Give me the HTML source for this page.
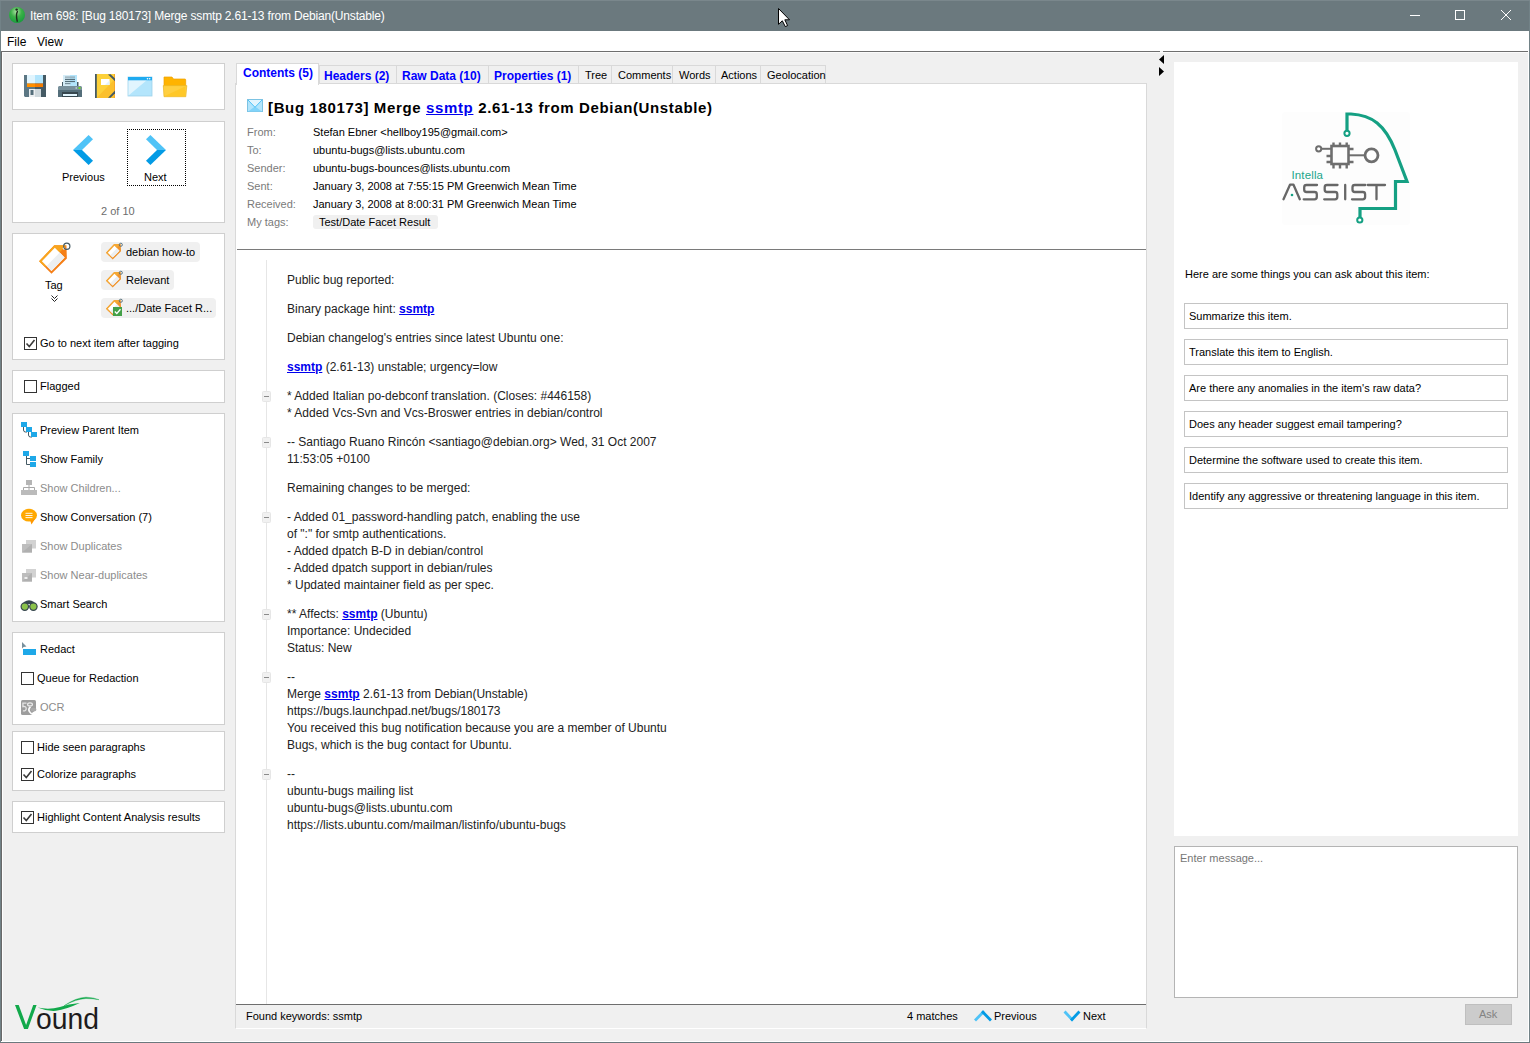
<!DOCTYPE html>
<html><head><meta charset="utf-8">
<style>
*{box-sizing:border-box;margin:0;padding:0}
html,body{width:1530px;height:1043px;overflow:hidden;background:#f0f0f0;font-family:"Liberation Sans",sans-serif;font-size:11px;color:#000}
.a{position:absolute}
.t{position:absolute;white-space:pre;line-height:1}
.box{position:absolute;background:#fff;border:1px solid #cfcfcf}
.cb{position:absolute;width:13px;height:13px;border:1px solid #333;background:#fff}
.tab{position:absolute;top:65px;height:18px;background:#f0f0f0;border:1px solid #d9d9d9;border-bottom:none}
.sg{position:absolute;left:1184px;width:324px;height:26px;border:1px solid #c4c4c4;background:#fff}
.bd{font-size:12px;color:#222}
a,.lk{color:#0000ee;text-decoration:underline;font-weight:bold}
</style></head><body>
<!-- window frame -->
<div class="a" style="left:0;top:0;width:1530px;height:31px;background:#6b797e"></div>
<div class="a" style="left:0;top:0;width:1px;height:1043px;background:#728287"></div>
<div class="a" style="left:1529px;top:0;width:1px;height:1043px;background:#728287"></div>
<div class="a" style="left:0;top:1042px;width:1530px;height:1px;background:#6b797e"></div>
<div class="a" style="left:1px;top:1041px;width:1528px;height:1px;background:#fff"></div>
<div class="a" style="left:1528px;top:31px;width:1px;height:1011px;background:#fff"></div>
<div class="a" style="left:1px;top:31px;width:1px;height:20px;background:#fff"></div>
<div class="a" style="left:1px;top:51px;width:1px;height:990px;background:#696969"></div>
<div class="a" style="left:2px;top:52px;width:1px;height:989px;background:#fff"></div>
<div class="a" style="left:2px;top:52px;width:1526px;height:1px;background:#fbfbfb"></div>
<!-- menu bar -->
<div class="a" style="left:1px;top:31px;width:1527px;height:20px;background:#fff"></div>
<div class="a" style="left:1px;top:51px;width:1527px;height:1px;background:#6e6e6e"></div>

<!-- left boxes -->
<div class="box" style="left:12px;top:63px;width:213px;height:47px"></div>
<div class="box" style="left:12px;top:121px;width:213px;height:102px"></div>
<div class="box" style="left:12px;top:233px;width:213px;height:127px"></div>
<div class="box" style="left:12px;top:370px;width:213px;height:33px"></div>
<div class="box" style="left:12px;top:413px;width:213px;height:209px"></div>
<div class="box" style="left:12px;top:632px;width:213px;height:93px"></div>
<div class="box" style="left:12px;top:731px;width:213px;height:60px"></div>
<div class="box" style="left:12px;top:801px;width:213px;height:32px"></div>

<!-- center content -->
<div class="a" style="left:235px;top:83px;width:912px;height:946px;background:#fff;border:1px solid #d9d9d9;border-bottom-color:#fff"></div>
<div class="a" style="left:237px;top:249px;width:909px;height:1px;background:#7a7a7a"></div>
<div class="a" style="left:266px;top:260px;width:1px;height:744px;background:#e6e6e6"></div>
<div class="a" style="left:236px;top:1004px;width:910px;height:1px;background:#6e6e6e"></div>
<div class="a" style="left:236px;top:1005px;width:910px;height:23px;background:#f0f0f0"></div>

<!-- right panel -->
<div class="a" style="left:1174px;top:62px;width:344px;height:774px;background:#fff"></div>
<div class="a" style="left:1174px;top:846px;width:344px;height:152px;background:#fff;border:1px solid #b4b4b4"></div>
<div class="a" style="left:1465px;top:1004px;width:47px;height:21px;background:#cccccc;border:1px solid #bfbfbf"></div>


<svg class="a" style="left:0;top:0" width="1530" height="1043" viewBox="0 0 1530 1043">
<!-- title bar accents -->
<rect x="0" y="0" width="1530" height="1" fill="#7a878c"/>
<!-- app icon -->
<defs>
<radialGradient id="gg" cx="0.45" cy="0.3" r="0.75"><stop offset="0" stop-color="#a8e0a0"/><stop offset="0.45" stop-color="#3cb048"/><stop offset="1" stop-color="#129a3a"/></radialGradient>
</defs>
<circle cx="17" cy="15" r="8" fill="url(#gg)"/>
<circle cx="16.6" cy="9.6" r="1.2" fill="#1d2a1d"/><path d="M17.4,11.6 C16,13.8 16.4,17.5 17.2,21.2" stroke="#1d2a1d" stroke-width="1.4" fill="none" stroke-linecap="round"/>
<!-- window controls -->
<rect x="1410" y="15" width="10" height="1" fill="#fff"/>
<rect x="1455.5" y="10.5" width="9" height="9" fill="none" stroke="#fff" stroke-width="1"/>
<path d="M1501,10 L1511,20 M1511,10 L1501,20" stroke="#fff" stroke-width="1"/>
<!-- mouse cursor -->
<path d="M778.5,8.5 L778.5,24.3 L782.3,20.8 L785.3,26.6 L787.6,25.6 L784.8,19.8 L789.5,19.8 Z" fill="#fff" stroke="#000" stroke-width="1" stroke-linejoin="miter"/>

<!-- floppy -->
<g transform="translate(24,75)">
<path d="M0,0 H11 V22 H1 L0,21 Z" fill="#5c7784"/>
<rect x="11" y="0" width="11" height="22" fill="#455a64"/>
<rect x="3" y="0" width="8" height="8.5" fill="#e1f5fe"/>
<rect x="11" y="0" width="8" height="8.5" fill="#b3e5fc"/>
<rect x="3" y="8.5" width="8" height="3.5" fill="#ff8f00"/>
<rect x="11" y="8.5" width="8" height="3.5" fill="#f57c00"/>
<rect x="5" y="14" width="6" height="8" fill="#eceff1"/>
<rect x="11" y="14" width="6" height="8" fill="#cfd8dc"/>
<rect x="6.5" y="15" width="3" height="5" fill="#546e7a"/>
</g>
<!-- printer -->
<g transform="translate(56,72)">
<rect x="6" y="10" width="1.5" height="5" fill="#455a64"/>
<rect x="21" y="10" width="1.5" height="5" fill="#455a64"/>
<rect x="7" y="3" width="14" height="11" fill="#d4ecf7"/>
<rect x="14" y="3" width="7" height="11" fill="#b3e5fc"/>
<rect x="9" y="4.5" width="10" height="1.2" fill="#90a4ae"/>
<rect x="9" y="6.8" width="10" height="1.2" fill="#546e7a"/>
<rect x="9" y="8.9" width="10" height="1.2" fill="#546e7a"/>
<rect x="9" y="11" width="5.5" height="1.2" fill="#78909c"/>
<path d="M2,15 L3,14 H25 L26,15 V18 H2 Z" fill="#78909c"/>
<rect x="2" y="18" width="24" height="7" fill="#546e7a"/>
<rect x="6" y="20" width="16" height="5" fill="#37474f"/>
<rect x="7" y="22" width="14" height="2" fill="#e1f5fe"/>
<rect x="22.5" y="15" width="2" height="2" fill="#76d820"/>
<rect x="19.5" y="15" width="1.5" height="2" fill="#b0bec5"/>
</g>
<!-- notebook -->
<g transform="translate(92,72)">
<rect x="3" y="2" width="20" height="24" fill="#fdd13a"/>
<path d="M4.5,26 L22,8 V26 Z" fill="#fbc02d"/>
<rect x="22" y="2" width="1" height="24" fill="#f9a825"/>
<rect x="3" y="2" width="1.8" height="24" fill="#455a64"/>
<path d="M16,2.5 L23,9.2 V6.6 L18.6,2.3 Z" fill="#455a64"/>
<path d="M23,18.6 L16,25.8 H18.6 L23,21.3 Z" fill="#455a64"/>
<rect x="9" y="7" width="8.5" height="6" fill="#fff"/>
<path d="M13,13 L17.5,8.5 V13 Z" fill="#e3f2fd"/>
</g>
<!-- window icon -->
<g transform="translate(128,77)">
<rect x="0" y="0" width="24" height="19" fill="#b3e5fc" stroke="#9fd3ea" stroke-width="0.8"/>
<path d="M0.5,18.5 L19,3 H0.5 Z" fill="#e1f5fe"/>
<rect x="0" y="0" width="24" height="3.3" fill="#1eaaf0"/>
<circle cx="19.5" cy="1.7" r="0.8" fill="#fff"/><circle cx="21.7" cy="1.7" r="0.8" fill="#fff"/>
</g>
<!-- folder -->
<g transform="translate(161,72)">
<path d="M3,5 H11 L12.5,7 H24 Q24.7,7 24.7,8 V15 H3 Z" fill="#ffb300" stroke="#eea000" stroke-width="0.7"/>
<path d="M2.3,13.6 H25.8 L24.8,24.7 H3 Z" fill="#ffcf40" stroke="#e9b424" stroke-width="0.7"/>
<path d="M3.3,24.2 L24.5,14.2 L24.2,24.2 Z" fill="#ffc828"/>
</g>

<!-- previous / next chevrons -->
<path d="M73,150 L88.6,135 L93,139.2 L82,150 Z" fill="#4fc3f7"/>
<path d="M73,150 L88.6,165 L93,160.8 L82,150 Z" fill="#039be5"/>
<path d="M166,150 L150.4,135 L146,139.2 L157,150 Z" fill="#4fc3f7"/>
<path d="M166,150 L150.4,165 L146,160.8 L157,150 Z" fill="#039be5"/>


<!-- big tag -->
<g>
<path d="M39.1,261.2 L54.3,245.2 L66.4,245.4 L66.9,258.6 L51.5,273.7 Z" fill="#f57f17"/>
<path d="M39.1,261.2 L54.3,245.2 L66.6,245.3 L45,266.9 Z" fill="#f9a51e"/>
<path d="M41.9,261.2 L54.8,247.8 L64.6,257.4 L51.5,270.9 Z" fill="#fff"/>
<path d="M46.6,266.1 L59.7,252.6 L64.6,257.4 L51.5,270.9 Z" fill="#eceff1"/>
<circle cx="64" cy="248.4" r="1.2" fill="#fff"/>
<circle cx="66.8" cy="246.3" r="3.1" fill="none" stroke="#455a64" stroke-width="1.2"/>
</g>
<path d="M51.5,295.5 L54.5,298.5 L57.5,295.5 M51.5,298.5 L54.5,301.5 L57.5,298.5" fill="none" stroke="#222" stroke-width="1"/>

<!-- chips -->
<rect x="101" y="242" width="99" height="20" rx="4" fill="#f0f0f0"/>
<rect x="101" y="270" width="73" height="20" rx="4" fill="#f0f0f0"/>
<rect x="101" y="298" width="115" height="20" rx="4" fill="#f0f0f0"/>
<g id="mt" transform="translate(106,252.7) scale(0.54) translate(-39.1,-261.2)">
<path d="M39.1,261.2 L54.3,245.2 L66.4,245.4 L66.9,258.6 L51.5,273.7 Z" fill="#f0932a"/>
<path d="M39.1,261.2 L54.3,245.2 L66.6,245.3 L45,266.9 Z" fill="#f5a834"/>
<path d="M42.4,261.2 L54.8,248.3 L64,257.4 L51.5,270.3 Z" fill="#fff"/>
<path d="M46.8,266 L59.5,253 L64,257.4 L51.5,270.3 Z" fill="#eceff1"/>
<circle cx="66.5" cy="246.5" r="2.9" fill="none" stroke="#546e7a" stroke-width="1.7"/>
</g>
<use href="#mt" y="28"/>
<use href="#mt" y="56"/>
<rect x="113" y="307" width="9" height="9" fill="#43a047"/>
<path d="M114.8,311.5 L116.8,313.5 L120.5,309.3" fill="none" stroke="#fff" stroke-width="1.3"/>

<!-- checkboxes -->
<rect x="24.5" y="337.5" width="12" height="12" fill="#fff" stroke="#333" stroke-width="1"/>
<path d="M26.5,343.5 L29.3,346.5 L34.5,340" fill="none" stroke="#3a3a3a" stroke-width="1.6"/>
<rect x="24.5" y="380.5" width="12" height="12" fill="#fff" stroke="#333" stroke-width="1"/>
<rect x="21.5" y="672.5" width="12" height="12" fill="#fff" stroke="#333" stroke-width="1"/>
<rect x="21.5" y="741.5" width="12" height="12" fill="#fff" stroke="#333" stroke-width="1"/>
<rect x="21.5" y="768.5" width="12" height="12" fill="#fff" stroke="#333" stroke-width="1"/>
<path d="M23.5,774.5 L26.3,777.5 L31.5,771" fill="none" stroke="#3a3a3a" stroke-width="1.6"/>
<rect x="21.5" y="811.5" width="12" height="12" fill="#fff" stroke="#333" stroke-width="1"/>
<path d="M23.5,817.5 L26.3,820.5 L31.5,814" fill="none" stroke="#3a3a3a" stroke-width="1.6"/>

<!-- preview parent icon -->
<path d="M23.5,427 V430 Q23.5,432 25.5,432 H27 M28.5,432 V435 Q28.5,437 30.5,437 H32" fill="none" stroke="#455a64" stroke-width="1"/>
<rect x="21" y="422" width="6" height="5" fill="#1ea8e8"/>
<rect x="26" y="427" width="6" height="5" fill="#1ea8e8"/>
<rect x="31" y="432" width="6" height="5" fill="#1ea8e8"/>
<!-- show family icon -->
<path d="M26.5,456 V464.5 H30 M26.5,458.5 H30" fill="none" stroke="#455a64" stroke-width="1"/>
<rect x="23" y="451" width="6" height="5" fill="#1ea8e8"/>
<rect x="30" y="456" width="6" height="5" fill="#1ea8e8"/>
<rect x="30" y="462" width="6" height="5" fill="#1ea8e8"/>
<!-- show children (gray) -->
<rect x="26" y="480" width="6" height="5" fill="#b5b5b5"/>
<path d="M29,485 V490 M23.5,490 V487.5 H34.5 V490" fill="none" stroke="#a8a8a8" stroke-width="1"/>
<rect x="21" y="490" width="16" height="5" fill="#bbbbbb"/>
<!-- conversation -->
<ellipse cx="29" cy="515.2" rx="8" ry="6.4" fill="#ffa800"/>
<path d="M30,520 L31.5,524.5 L35,519 Z" fill="#ff9800"/>
<path d="M25.5,513.3 H32.5 M25.5,515.5 H32.5 M25.5,517.6 H32.5" stroke="#fff" stroke-width="0.9"/>
<!-- duplicates -->
<rect x="26" y="540" width="10" height="8.5" fill="#d2d2d2"/>
<rect x="22" y="544" width="10" height="8.5" fill="#bdbdbd"/>
<path d="M22,552.5 L32,544 V552.5 Z" fill="#b0b0b0"/>
<rect x="26" y="569" width="10" height="8.5" fill="#d2d2d2"/>
<rect x="22" y="573" width="10" height="8.5" fill="#bdbdbd"/>
<path d="M22,581.5 L32,573 V581.5 Z" fill="#b0b0b0"/>
<rect x="24.5" y="577" width="3" height="2" fill="#eee"/>
<!-- binoculars -->
<path d="M24,602 Q29,598.5 34,602 L35,604 H23 Z" fill="#37474f"/>
<circle cx="24.8" cy="606.6" r="3.7" fill="#8bc34a" stroke="#37474f" stroke-width="1.2"/>
<circle cx="33.4" cy="606.6" r="3.7" fill="#8bc34a" stroke="#37474f" stroke-width="1.2"/>
<!-- redact -->
<rect x="23" y="649" width="13" height="6" fill="#1ea8e8"/>
<path d="M22,642 V648.5 L23.6,647 L26.5,646.5 Z" fill="#78909c"/>
<!-- ocr -->
<rect x="21" y="700" width="15" height="15" rx="1.5" fill="#9d9d9d"/>
<path d="M26.5,703.2 H22.9 V706.6 Q26.2,706 26.2,708.6 Q26.2,711.2 22.9,710.8" fill="none" stroke="#e4e4e4" stroke-width="1.3"/>
<ellipse cx="30" cy="704.4" rx="2.4" ry="1.5" fill="none" stroke="#ececec" stroke-width="1.2"/>
<path d="M30.5,706.8 Q27.8,709 29.4,711.5 L31.8,714.3" fill="none" stroke="#fafafa" stroke-width="1.6"/>
<path d="M31,713.8 L35.2,710.6 H36.2 V715.2 H32.5 Z" fill="#fff"/>
<ellipse cx="33.4" cy="709.6" rx="3" ry="1.9" fill="#a9a9a9"/>
<!-- envelope -->
<g transform="translate(247,99)">
<rect x="0.5" y="0.5" width="15" height="12" fill="#b3e5fc" stroke="#7cc3e3" stroke-width="1"/>
<path d="M1,12.5 L8,7.5 L15,12.5 Z" fill="#81d4fa"/>
<path d="M1,1 L8,8 L15,1 Z" fill="#e1f5fe"/>
<path d="M1,1 L8,8.3 L15,1" fill="none" stroke="#4fc3f7" stroke-width="1"/>
</g>

<!-- fold markers -->
<g id="fm"><rect x="262.5" y="391.5" width="8" height="10" rx="1" fill="#f1f1f1" stroke="#e6e6e6" stroke-width="1"/><rect x="264" y="396" width="5" height="1" fill="#8a8a8a"/></g>
<use href="#fm" y="46"/>
<use href="#fm" y="121"/>
<use href="#fm" y="218"/>
<use href="#fm" y="281"/>
<use href="#fm" y="378"/>

<!-- status chevrons -->
<path d="M976,1019.5 L983,1012.3" stroke="#4fc3f7" stroke-width="2.8" stroke-linecap="square"/>
<path d="M983,1012.3 L990,1019.5" stroke="#039be5" stroke-width="2.8" stroke-linecap="square"/>
<path d="M1065.5,1012.5 L1072,1019.5" stroke="#4fc3f7" stroke-width="2.8" stroke-linecap="square"/>
<path d="M1072,1019.5 L1078.5,1012.5" stroke="#039be5" stroke-width="2.8" stroke-linecap="square"/>

<!-- splitter arrows -->
<rect x="1160" y="51" width="3" height="1" fill="#f4f4f4"/>
<path d="M1164,55 V64 L1159,59.5 Z" fill="#000"/>
<path d="M1159,67 V76 L1164,71.5 Z" fill="#000"/>

<!-- Intella Assist logo -->
<rect x="1282" y="112" width="128" height="113" rx="3" fill="#fdfdfd"/>
<path d="M1347,131 V114 H1351 C1372,115 1385,125 1395,150 L1407,181.5 H1395.5 V208.5 H1360 V217" fill="none" stroke="#15a083" stroke-width="3.2"/>
<circle cx="1347" cy="133.3" r="2.6" fill="#fff" stroke="#15a083" stroke-width="2"/>
<circle cx="1359.8" cy="220" r="2.6" fill="#fff" stroke="#15a083" stroke-width="2"/>
<g stroke="#6e6e6e" fill="none">
<rect x="1331.5" y="146" width="17" height="18" stroke-width="2.6"/>
<path d="M1333.5,142.5 V146 M1340,142.5 V146 M1346.7,142.5 V146 M1333.5,164 V168.5 M1340,164 V168.5 M1346.7,164 V168.5 M1326.5,156 H1331 M1326.5,162 H1331 M1349,149 H1353.5 M1349,162 H1353.5" stroke-width="2.4"/>
<path d="M1321,148.8 H1331" stroke-width="2"/>
<circle cx="1318.7" cy="148.8" r="2.6" stroke-width="2" fill="#fff"/>
<path d="M1349,155.3 H1364" stroke-width="2"/>
<circle cx="1371.5" cy="155.3" r="6.5" stroke-width="2.8" fill="#fff"/>
</g>
<text x="1291.5" y="178.5" font-family="Liberation Sans" font-size="11.5" fill="#22a58a" textLength="31.5">Intella</text>
<g fill="none" stroke="#676767" stroke-width="2.3" stroke-linecap="round" stroke-linejoin="round">
<path d="M1283.5,199.3 L1290,184.7 H1293.5 L1299.8,199.3"/>
<path d="M1317,185 H1306.5 Q1304.2,185 1304.2,187.3 V189.8 Q1304.2,192 1306.5,192 H1314.5 Q1316.8,192 1316.8,194.3 V197 Q1316.8,199.3 1314.5,199.3 H1303.7"/>
<path d="M1337.5,185 H1327 Q1324.7,185 1324.7,187.3 V189.8 Q1324.7,192 1327,192 H1335 Q1337.3,192 1337.3,194.3 V197 Q1337.3,199.3 1335,199.3 H1324.2"/>
<path d="M1345.2,185 V199.3"/>
<path d="M1365.3,185 H1354.8 Q1352.5,185 1352.5,187.3 V189.8 Q1352.5,192 1354.8,192 H1362.8 Q1365.1,192 1365.1,194.3 V197 Q1365.1,199.3 1362.8,199.3 H1352"/>
<path d="M1367.8,185 H1385 M1376.5,185 V199.3"/>
</g>
<circle cx="1292" cy="195" r="1.3" fill="#15a083"/>

<!-- Vound logo -->
<path d="M15,1005 H18.7 L26.1,1025 L33.2,1005 H36.6 L27.9,1029 H24.1 Z" fill="#12a94b"/>
<text x="36" y="1029" font-family="Liberation Sans" font-size="30" fill="#1d1b1c" textLength="63" lengthAdjust="spacingAndGlyphs">ound</text>
<path d="M37.5,1007.5 Q47,1011.5 56,1010.8 Q66,1009.5 79.8,1003 Q68,1004 60,1007 Q49,1010 37.5,1007.5 Z" fill="#12a94b"/>
<path d="M64,1005.8 Q76,997.5 86,997.2 Q93,997.2 99,999.7 Q92,998.5 86,998.5 Q76,999 64,1005.8 Z" fill="#12a94b" stroke="#12a94b" stroke-width="0.4"/>
</svg>
<div class="a" style="left:127px;top:129px;width:59px;height:57px;border:1px dotted #000"></div>
<!-- title bar text -->
<div class="t" style="left:30px;top:10px;font-size:12px;color:#fff;letter-spacing:-0.17px">Item 698: [Bug 180173] Merge ssmtp 2.61-13 from Debian(Unstable)</div>
<!-- menu -->
<div class="t" style="left:7px;top:36px;font-size:12px">File</div>
<div class="t" style="left:37px;top:36px;font-size:12px">View</div>

<!-- left panel text -->
<div class="t" style="left:62px;top:172px">Previous</div>
<div class="t" style="left:144px;top:172px">Next</div>
<div class="t" style="left:101px;top:206px;color:#6d6d6d">2 of 10</div>
<div class="t" style="left:45px;top:280px">Tag</div>
<div class="t" style="left:126px;top:247px">debian how-to</div>
<div class="t" style="left:126px;top:275px">Relevant</div>
<div class="t" style="left:126px;top:303px">.../Date Facet R...</div>
<div class="t" style="left:40px;top:338px">Go to next item after tagging</div>
<div class="t" style="left:40px;top:381px">Flagged</div>
<div class="t" style="left:40px;top:425px">Preview Parent Item</div>
<div class="t" style="left:40px;top:454px">Show Family</div>
<div class="t" style="left:40px;top:483px;color:#8c8c8c">Show Children...</div>
<div class="t" style="left:40px;top:512px">Show Conversation (7)</div>
<div class="t" style="left:40px;top:541px;color:#8c8c8c">Show Duplicates</div>
<div class="t" style="left:40px;top:570px;color:#8c8c8c">Show Near-duplicates</div>
<div class="t" style="left:40px;top:599px">Smart Search</div>
<div class="t" style="left:40px;top:644px">Redact</div>
<div class="t" style="left:37px;top:673px">Queue for Redaction</div>
<div class="t" style="left:40px;top:702px;color:#8c8c8c">OCR</div>
<div class="t" style="left:37px;top:742px">Hide seen paragraphs</div>
<div class="t" style="left:37px;top:769px">Colorize paragraphs</div>
<div class="t" style="left:37px;top:812px">Highlight Content Analysis results</div>

<!-- tabs -->
<div class="a" style="left:236px;top:63px;width:83px;height:22px;background:#fff;border:1px solid #d9d9d9;border-bottom:none"></div>
<div class="tab" style="left:319px;width:78px"></div>
<div class="tab" style="left:396px;width:93px"></div>
<div class="tab" style="left:488px;width:91px"></div>
<div class="tab" style="left:578px;width:34px"></div>
<div class="tab" style="left:611px;width:62px"></div>
<div class="tab" style="left:672px;width:44px"></div>
<div class="tab" style="left:715px;width:46px"></div>
<div class="tab" style="left:760px;width:66px"></div>
<div class="t" style="left:243px;top:67px;font-size:12px;font-weight:bold;color:#0000ff">Contents (5)</div>
<div class="t" style="left:324px;top:70px;font-size:12px;font-weight:bold;color:#0000ff">Headers (2)</div>
<div class="t" style="left:402px;top:70px;font-size:12px;font-weight:bold;color:#0000ff">Raw Data (10)</div>
<div class="t" style="left:494px;top:70px;font-size:12px;font-weight:bold;color:#0000ff">Properties (1)</div>
<div class="t" style="left:585px;top:70px">Tree</div>
<div class="t" style="left:618px;top:70px">Comments</div>
<div class="t" style="left:679px;top:70px">Words</div>
<div class="t" style="left:721px;top:70px">Actions</div>
<div class="t" style="left:767px;top:70px">Geolocation</div>

<!-- header -->
<div class="t" style="left:268px;top:100px;font-size:15px;font-weight:bold;letter-spacing:0.64px">[Bug 180173] Merge <span class="lk">ssmtp</span> 2.61-13 from Debian(Unstable)</div>
<div class="t" style="left:247px;top:127px;color:#7a7a7a">From:</div>
<div class="t" style="left:247px;top:145px;color:#7a7a7a">To:</div>
<div class="t" style="left:247px;top:163px;color:#7a7a7a">Sender:</div>
<div class="t" style="left:247px;top:181px;color:#7a7a7a">Sent:</div>
<div class="t" style="left:247px;top:199px;color:#7a7a7a">Received:</div>
<div class="t" style="left:247px;top:217px;color:#7a7a7a">My tags:</div>
<div class="t" style="left:313px;top:127px">Stefan Ebner &lt;hellboy195@gmail.com&gt;</div>
<div class="t" style="left:313px;top:145px">ubuntu-bugs@lists.ubuntu.com</div>
<div class="t" style="left:313px;top:163px">ubuntu-bugs-bounces@lists.ubuntu.com</div>
<div class="t" style="left:313px;top:181px">January 3, 2008 at 7:55:15 PM Greenwich Mean Time</div>
<div class="t" style="left:313px;top:199px">January 3, 2008 at 8:00:31 PM Greenwich Mean Time</div>
<div class="a" style="left:313px;top:215px;width:125px;height:14px;background:#f0f0f0;border-radius:3px"></div>
<div class="t" style="left:319px;top:217px">Test/Date Facet Result</div>

<!-- body -->
<div class="t bd" style="left:287px;top:274px">Public bug reported:</div>
<div class="t bd" style="left:287px;top:303px">Binary package hint: <span class="lk">ssmtp</span></div>
<div class="t bd" style="left:287px;top:332px">Debian changelog's entries since latest Ubuntu one:</div>
<div class="t bd" style="left:287px;top:361px"><span class="lk">ssmtp</span> (2.61-13) unstable; urgency=low</div>
<div class="t bd" style="left:287px;top:390px">* Added Italian po-debconf translation. (Closes: #446158)</div>
<div class="t bd" style="left:287px;top:407px">* Added Vcs-Svn and Vcs-Broswer entries in debian/control</div>
<div class="t bd" style="left:287px;top:436px">-- Santiago Ruano Rincón &lt;santiago@debian.org&gt; Wed, 31 Oct 2007</div>
<div class="t bd" style="left:287px;top:453px">11:53:05 +0100</div>
<div class="t bd" style="left:287px;top:482px">Remaining changes to be merged:</div>
<div class="t bd" style="left:287px;top:511px">- Added 01_password-handling patch, enabling the use</div>
<div class="t bd" style="left:287px;top:528px">of ":" for smtp authentications.</div>
<div class="t bd" style="left:287px;top:545px">- Added dpatch B-D in debian/control</div>
<div class="t bd" style="left:287px;top:562px">- Added dpatch support in debian/rules</div>
<div class="t bd" style="left:287px;top:579px">* Updated maintainer field as per spec.</div>
<div class="t bd" style="left:287px;top:608px">** Affects: <span class="lk">ssmtp</span> (Ubuntu)</div>
<div class="t bd" style="left:287px;top:625px">Importance: Undecided</div>
<div class="t bd" style="left:287px;top:642px">Status: New</div>
<div class="t bd" style="left:287px;top:671px">--</div>
<div class="t bd" style="left:287px;top:688px">Merge <span class="lk">ssmtp</span> 2.61-13 from Debian(Unstable)</div>
<div class="t bd" style="left:287px;top:705px">https://bugs.launchpad.net/bugs/180173</div>
<div class="t bd" style="left:287px;top:722px">You received this bug notification because you are a member of Ubuntu</div>
<div class="t bd" style="left:287px;top:739px">Bugs, which is the bug contact for Ubuntu.</div>
<div class="t bd" style="left:287px;top:768px">--</div>
<div class="t bd" style="left:287px;top:785px">ubuntu-bugs mailing list</div>
<div class="t bd" style="left:287px;top:802px">ubuntu-bugs@lists.ubuntu.com</div>
<div class="t bd" style="left:287px;top:819px">https://lists.ubuntu.com/mailman/listinfo/ubuntu-bugs</div>

<!-- status bar -->
<div class="t" style="left:246px;top:1011px">Found keywords: ssmtp</div>
<div class="t" style="left:907px;top:1011px">4 matches</div>
<div class="t" style="left:994px;top:1011px">Previous</div>
<div class="t" style="left:1083px;top:1011px">Next</div>

<!-- right panel text -->
<div class="t" style="left:1185px;top:269px">Here are some things you can ask about this item:</div>
<div class="sg" style="top:303px"></div><div class="t" style="left:1189px;top:311px">Summarize this item.</div>
<div class="sg" style="top:339px"></div><div class="t" style="left:1189px;top:347px">Translate this item to English.</div>
<div class="sg" style="top:375px"></div><div class="t" style="left:1189px;top:383px">Are there any anomalies in the item's raw data?</div>
<div class="sg" style="top:411px"></div><div class="t" style="left:1189px;top:419px">Does any header suggest email tampering?</div>
<div class="sg" style="top:447px"></div><div class="t" style="left:1189px;top:455px">Determine the software used to create this item.</div>
<div class="sg" style="top:483px"></div><div class="t" style="left:1189px;top:491px">Identify any aggressive or threatening language in this item.</div>
<div class="t" style="left:1180px;top:853px;color:#767676">Enter message...</div>
<div class="t" style="left:1479px;top:1009px;color:#838383">Ask</div>




</body></html>
